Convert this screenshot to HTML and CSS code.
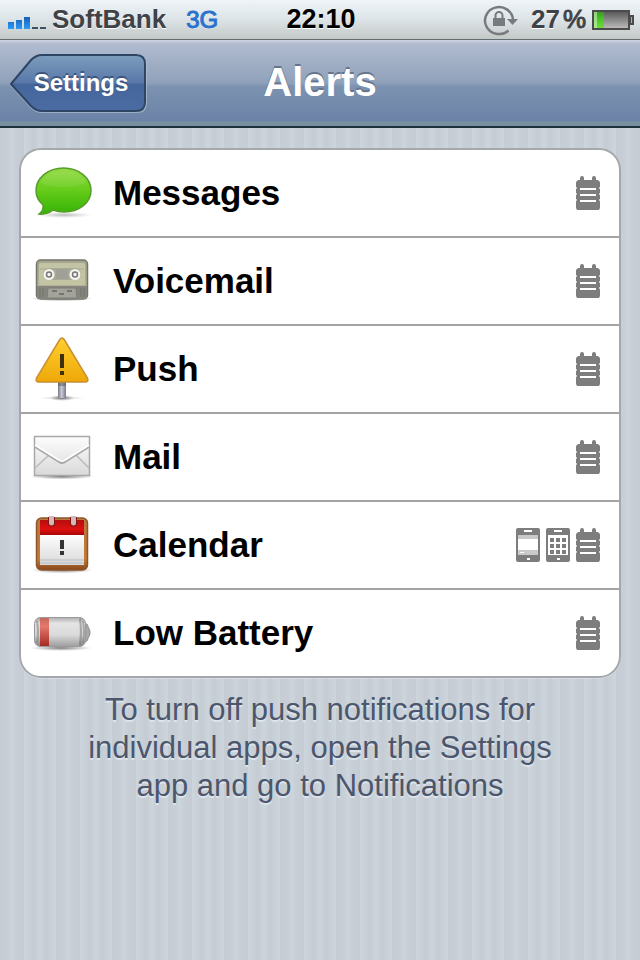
FILE: index.html
```html
<!DOCTYPE html>
<html lang="en">
<head>
<meta charset="utf-8">
<meta name="viewport" content="width=device-width, initial-scale=1">
<title>Alerts</title>
<link rel="stylesheet" href="styles.css">
</head>
<body>
<svg class="defs" width="0" height="0" aria-hidden="true">
  <defs>
    <linearGradient id="green" x1="0" y1="0" x2="0" y2="1"><stop offset="0" stop-color="#96da45"/><stop offset=".45" stop-color="#68cd1c"/><stop offset="1" stop-color="#35b305"/></linearGradient>
    <linearGradient id="yellow" x1="0" y1="0" x2="0" y2="1"><stop offset="0" stop-color="#ffcf2e"/><stop offset="1" stop-color="#eea808"/></linearGradient>
    <linearGradient id="paper" x1="0" y1="0" x2="0" y2="1"><stop offset="0" stop-color="#fdfdfd"/><stop offset="1" stop-color="#d9d9d9"/></linearGradient>
    <linearGradient id="tube" x1="0" y1="0" x2="0" y2="1"><stop offset="0" stop-color="#9b9b9b"/><stop offset=".2" stop-color="#dedede"/><stop offset=".6" stop-color="#d2d2d2"/><stop offset="1" stop-color="#858585"/></linearGradient>
    <linearGradient id="redtube" x1="0" y1="0" x2="0" y2="1"><stop offset="0" stop-color="#c9685d"/><stop offset=".3" stop-color="#e4786c"/><stop offset="1" stop-color="#a52a22"/></linearGradient>
    <linearGradient id="wood" x1="0" y1="0" x2="0" y2="1"><stop offset="0" stop-color="#b87a42"/><stop offset=".8" stop-color="#c47a34"/><stop offset="1" stop-color="#85481c"/></linearGradient>
    <linearGradient id="redpage" x1="0" y1="0" x2="0" y2="1"><stop offset="0" stop-color="#b50d0d"/><stop offset=".6" stop-color="#df1010"/><stop offset="1" stop-color="#a80505"/></linearGradient>
    <linearGradient id="tape" x1="0" y1="0" x2="0" y2="1"><stop offset="0" stop-color="#a4a58c"/><stop offset="1" stop-color="#b9b99c"/></linearGradient>
    <linearGradient id="pole" x1="0" y1="0" x2="1" y2="0"><stop offset="0" stop-color="#777985"/><stop offset=".45" stop-color="#c9c9d8"/><stop offset="1" stop-color="#797a86"/></linearGradient>
    <linearGradient id="cellgrey" x1="0" y1="0" x2="0" y2="1"><stop offset="0" stop-color="#555"/><stop offset=".45" stop-color="#858585"/><stop offset="1" stop-color="#c2bebe"/></linearGradient>
    <linearGradient id="cellgreen" x1="0" y1="0" x2="0" y2="1"><stop offset="0" stop-color="#3c9a22"/><stop offset=".5" stop-color="#4fc52a"/><stop offset="1" stop-color="#6fdc40"/></linearGradient>
    <linearGradient id="signal" x1="0" y1="0" x2="0" y2="1"><stop offset="0" stop-color="#1560b8"/><stop offset="1" stop-color="#2b9bf4"/></linearGradient>
    <linearGradient id="back" x1="0" y1="0" x2="0" y2="1"><stop offset="0" stop-color="#7d9dbd"/><stop offset=".5" stop-color="#5877a8"/><stop offset=".52" stop-color="#45669c"/><stop offset="1" stop-color="#4a6ca2"/></linearGradient>
    <radialGradient id="shade"><stop offset="0" stop-color="#333" stop-opacity=".65"/><stop offset="1" stop-color="#555" stop-opacity="0"/></radialGradient>
    <symbol id="note" viewBox="0 0 24 34"><path d="M4 4V2a2 2 0 0 1 4 0v2h8V2a2 2 0 0 1 4 0v2h2l2 2v26l-1 2H1l-1-2V6l2-2z" fill="#7d7d7d"/><path d="M0 12h1M0 18h1M0 24h1M23 12h1M23 18h1M23 24h1" stroke="#d0d0d0" stroke-width="2"/><path d="M4 13h16M4 19h16M4 25h16" stroke="#fff" stroke-width="2"/></symbol>
  </defs>
</svg>

<div class="status">
  <div class="status-left">
    <svg class="bars" width="38" height="14" viewBox="0 0 38 14" role="img" aria-label="Signal 3 of 5"><path d="M0 6h6v7H0zM8 4h6v9H8zM16 1h6v12h-6z" fill="url(#signal)"/><path d="M24 11h6v2h-6zM32 11h6v2h-6z" fill="#425063"/></svg>
    <span>SoftBank</span>
    <span class="network">3G</span>
  </div>
  <time class="clock">22:10</time>
  <div class="status-right">
    <svg width="36" height="32" viewBox="0 0 36 32" role="img" aria-label="Rotation locked"><path d="M30 16A14 13.500 0 1 0 25.500 26.500" fill="none" stroke="#777b80" stroke-width="2.500"/><path d="M24 15h11l-5.500 6z" fill="#777b80"/><path d="M10 14h12v8H10z" fill="#777b80"/><path d="M12.500 14v-2.500a3.500 3.500 0 0 1 7 0V14" fill="none" stroke="#777b80" stroke-width="2"/></svg>
    <span class="percent"><span>27</span><span class="unit">%</span></span>
    <svg width="42" height="22" viewBox="0 0 42 22" role="img" aria-label="Battery"><path d="M1 2h36v18H1z" fill="url(#cellgrey)" stroke="#4b4b4b" stroke-width="2"/><path d="M2 3h10v16H2z" fill="url(#cellgreen)"/><path d="M2 3h3v16H2z" fill="#c9f7b8" opacity=".6"/><path d="M38 7h3v8h-3z" fill="#aaa" stroke="#4b4b4b" stroke-width="2"/></svg>
  </div>
</div>

<header class="nav">
  <button class="back" type="button">
    <svg class="back-shape" width="138" height="60" viewBox="0 0 138 60" aria-hidden="true"><path d="M1 31 21 7q5-5 11-5h95q9 0 9 9v38q0 9-9 9H32q-6 0-11-5z" fill="none" stroke="#b6c3d4" stroke-opacity=".65" stroke-width="2"/><path d="M1 30 21 6q5-5 11-5h94q9 0 9 9v38q0 9-9 9H32q-6 0-11-5z" fill="url(#back)" stroke="#2f4564" stroke-width="2"/></svg>
    <span class="back-label">Settings</span>
  </button>
  <h1>Alerts</h1>
</header>

<main>
  <ul class="list">
    <li><a class="row" href="#messages">
      <svg class="icon" viewBox="0 0 64 64" aria-hidden="true"><ellipse cx="34" cy="54" rx="28" ry="3" fill="url(#shade)" opacity=".5"/><path d="M33.500 7C49 7 61 17 61 29.500S49 51 34 51q-6 0-11-2-6 5-14 4 5-4 4-9-7-6-7-14.500C6 17 18 7 33.500 7z" fill="url(#green)" stroke="#589c2c" stroke-width="1.500"/><path d="M11 22C15 6 52 6 56 22 44 27 23 27 11 22z" fill="#fff" opacity=".08"/></svg>
      <span class="name">Messages</span>
      <span class="marks"><svg class="mark"><use href="#note"/></svg></span></a></li>
    <li><a class="row" href="#voicemail">
      <svg class="icon" viewBox="0 0 64 64" aria-hidden="true"><ellipse cx="32" cy="49.500" rx="31" ry="3" fill="url(#shade)"/><rect x="6.500" y="11" width="51" height="39" rx="4" fill="url(#tape)" stroke="#74756b" stroke-width="1.500"/><rect x="9" y="14" width="46" height="22" rx="2" fill="#c3c4a3"/><path d="M10 20h44" stroke="#aaaa8e"/><path d="M7 37h50v11q0 2-2 2H9q-2 0-2-2z" fill="#85857f"/><rect x="13" y="19" width="38" height="12" rx="6" fill="#a9a997"/><rect x="26" y="20" width="12" height="10" fill="#a0a096"/><circle cx="19" cy="25.500" r="5.500" fill="#f5f5f0"/><circle cx="45" cy="25.500" r="5.500" fill="#f5f5f0"/><g fill="none" stroke="#777" stroke-width="1.500"><circle cx="19" cy="25.500" r="2.500"/><circle cx="45" cy="25.500" r="2.500"/></g><path d="M17 49l1-10h28l1 10z" fill="#a3a39b" stroke="#7d7d76"/><path d="M22 42h5M29 45h5M37 42h5" stroke="#666" stroke-width="1.500"/><path d="M10 39v9M13 39v9M51 39v9M54 39v9" stroke="#72726d"/></svg>
      <span class="name">Voicemail</span>
      <span class="marks"><svg class="mark"><use href="#note"/></svg></span></a></li>
    <li><a class="row" href="#push">
      <svg class="icon" viewBox="0 0 64 64" aria-hidden="true"><ellipse cx="32" cy="61" rx="23" ry="2" fill="url(#shade)" opacity=".4"/><ellipse cx="32" cy="61" rx="12" ry="3" fill="url(#shade)"/><path d="M28 44h8v17h-8z" fill="url(#pole)"/><path d="M28 45h8v4h-8z" fill="#555" opacity=".5"/><path d="M29.500 3q2.500-4 5 0l23 38q1.500 4-2.500 4H9q-4 0-2.500-4z" fill="url(#yellow)" stroke="#c89032" stroke-width="1.500"/><path d="M30 17h4v14h-4zM30 34h4v4h-4z" fill="#3b320d"/></svg>
      <span class="name">Push</span>
      <span class="marks"><svg class="mark"><use href="#note"/></svg></span></a></li>
    <li><a class="row" href="#mail">
      <svg class="icon" viewBox="0 0 64 64" aria-hidden="true"><ellipse cx="32" cy="51.500" rx="32" ry="3" fill="url(#shade)"/><path d="M4.500 11.500h55v39h-55z" fill="url(#paper)" stroke="#a9a9a9" stroke-width="1.500"/><path d="M5 43 19 30M59 43 46 30" fill="none" stroke="#bcbcbc" stroke-width="1.500"/><path d="M5 22 29 37q3 2 6 0l24-15" fill="none" stroke="#aaa" stroke-width="2"/><path d="M5 20 29 35q3 2 6 0l24-15" fill="none" stroke="#fff" stroke-width="1.500"/></svg>
      <span class="name">Mail</span>
      <span class="marks"><svg class="mark"><use href="#note"/></svg></span></a></li>
    <li><a class="row" href="#calendar">
      <svg class="icon" viewBox="0 0 64 64" aria-hidden="true"><ellipse cx="32" cy="57" rx="31" ry="3.500" fill="url(#shade)"/><rect x="6.500" y="5" width="51" height="52" rx="5" fill="url(#wood)" stroke="#8d552a" stroke-width="1.500"/><path d="M10 7h44v15H10z" fill="url(#redpage)"/><path d="M10 22h44v30H10z" fill="url(#paper)"/><path d="M10 47h44M10 50h44" stroke="#b5bcc2"/><path d="M18 4h7v6a3.500 3.500 0 0 1-7 0zM40 4h7v6a3.500 3.500 0 0 1-7 0z" fill="#7e1512"/><path d="M19 3h5v7a2.500 2.500 0 0 1-5 0zM41 3h5v7a2.500 2.500 0 0 1-5 0z" fill="#d6b8b8"/><path d="M30 27h4v9h-4zM30 38h4v4h-4z" fill="#333"/></svg>
      <span class="name">Calendar</span>
      <span class="marks">
        <svg class="mark" viewBox="0 0 24 34"><rect width="24" height="34" rx="2" fill="#7d7d7d"/><path d="M8 2h8v2H8zM11 30h3v2h-3z" fill="#fff"/><path d="M2 7h20v20H2z" fill="#c9c9c9"/><path d="M2 11h20v11H2z" fill="#fff"/><path d="M4 24h4v1H4z" fill="#fff"/></svg>
        <svg class="mark" viewBox="0 0 24 34"><rect width="24" height="34" rx="2" fill="#7d7d7d"/><path d="M8 2h8v2H8zM11 30h3v2h-3zM2 7h20v20H2z" fill="#fff"/><path d="M4 10h4v4H4zM10 10h4v4h-4zM16 10h4v4h-4zM4 16h4v4H4zM10 16h4v4h-4zM16 16h4v4h-4zM4 22h4v4H4zM10 22h4v4h-4zM16 22h4v4h-4z" fill="#7d7d7d"/></svg>
        <svg class="mark"><use href="#note"/></svg></span></a></li>
    <li><a class="row" href="#low-battery">
      <svg class="icon" viewBox="0 0 64 64" aria-hidden="true"><ellipse cx="31" cy="47" rx="31" ry="3" fill="url(#shade)"/><path d="M53 22q5 0 5 4 2 2 2 5.500T58 37q0 4-5 4z" fill="#a8a8a8" stroke="#888"/><rect x="4.500" y="16.500" width="51" height="29" rx="6" fill="url(#tube)" stroke="#9a9a9a"/><path d="M10 17h9v28h-9z" fill="url(#redtube)"/><path d="M19 17h30v28H19z" fill="#fff" opacity=".2"/><path d="M7 20q2 11 0 22M50 18q2 13 0 26M53 20q2 11 0 22" fill="none" stroke="#777" stroke-width="2" opacity=".5"/></svg>
      <span class="name">Low Battery</span>
      <span class="marks"><svg class="mark"><use href="#note"/></svg></span></a></li>
  </ul>
  <p class="hint">To turn off push notifications for individual apps, open the Settings app and go to Notifications</p>
</main>
</body>
</html>
```
FILE: styles.css
```css
* {
  box-sizing: border-box;
}

body {
  margin: 0;
  min-height: 100vh;
  font-family: "Liberation Sans", Arial, sans-serif;
  color: #000;
  background: #c5ccd4 repeating-linear-gradient(90deg,
    #c5ccd3 0, #c7ced5 8px, #cdd5dd 12px, #c7ced5 16px, #c5ccd3 24px,
    #cdd5dd 24px, #c5ccd3 34px, #cdd5dd 40px, #c5ccd3 46px, #cdd5dd 56px);
}

.defs {
  position: absolute;
}

svg {
  display: block;
  flex: none;
}

.status {
  display: grid;
  grid-template-columns: 1fr auto 1fr;
  align-items: center;
  height: 40px;
  padding: 0 6px 0 8px;
  font-size: 26px;
  font-weight: bold;
  color: #3f4347;
  background: linear-gradient(#eef4f8, #dde4e7 50%, #c3c9c6);
  border-bottom: 1px solid #626d70;
  text-shadow: 0 1px 0 #fff;
}

.status-left,
.status-right {
  display: flex;
  align-items: center;
}

.status-left {
  gap: 6px;
}

.bars {
  margin-top: 6px;
}

.network {
  margin-left: 14px;
  font-size: 24px;
  font-weight: normal;
  color: #2a72cc;
  -webkit-text-stroke: 1px #2a72cc;
}

.clock {
  font-size: 27px;
  color: #000;
}

.status-right {
  justify-content: flex-end;
  gap: 6px;
}

.percent {
  display: flex;
  gap: 3px;
  margin-left: 6px;
}

.unit {
  font-weight: normal;
  -webkit-text-stroke: 1px #3f4347;
}

.nav {
  display: grid;
  grid-template-columns: 1fr auto 1fr;
  align-items: center;
  height: 88px;
  padding: 2px 10px 0;
  background: linear-gradient(#d0d3e0 0, #b0bbd0 4px, #8fa1b9 50%, #7c92b0 54%, #6c83a8 94%, #778f9f 95%);
  border-bottom: 2px solid #1c323d;
}

.nav h1 {
  margin: 0;
  padding-bottom: 4px;
  font-size: 40px;
  line-height: 48px;
  color: #fff;
  text-shadow: 0 -2px 0 #66758c;
}

.back {
  display: grid;
  justify-self: start;
  align-items: center;
  padding: 0;
  border: 0;
  background: none;
  font: bold 24px/28px "Liberation Sans", Arial, sans-serif;
  color: #fff;
  text-shadow: 0 -2px 0 #3d557c;
}

.back-shape,
.back-label {
  grid-area: 1 / 1;
}

.back-label {
  padding: 0 0 2px 4px;
}

main {
  padding: 20px 19px;
}

.list {
  margin: 0;
  padding: 0;
  list-style: none;
  background: #fff;
  border: 2px solid #a5a8ab;
  border-radius: 22px;
  box-shadow: 0 1px 0 #d6dce2;
  overflow: hidden;
}

.list li + li {
  border-top: 2px solid #a3a3a3;
}

.row {
  display: flex;
  align-items: center;
  gap: 19px;
  height: 86px;
  padding: 0 19px 0 9px;
  color: inherit;
  text-decoration: none;
}

.icon {
  width: 64px;
  height: 64px;
}

.name {
  flex: 1;
  font-size: 35px;
  font-weight: bold;
  line-height: 40px;
}

.marks {
  display: flex;
  gap: 6px;
}

.mark {
  width: 24px;
  height: 34px;
}

.hint {
  max-width: 480px;
  margin: 13px auto 0;
  font-size: 31px;
  line-height: 38px;
  text-align: center;
  color: #4c566c;
  text-shadow: 0 2px 0 #dde4eb;
}
```
